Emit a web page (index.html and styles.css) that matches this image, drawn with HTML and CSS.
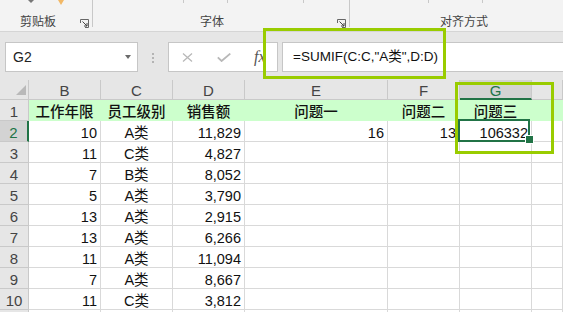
FILE: index.html
```html
<!DOCTYPE html>
<html lang="zh-CN">
<head>
    <meta charset="UTF-8">
    <title>SUMIF</title>
    <link rel="stylesheet" href="styles.css">
</head>
<body>
<div class="app">
    <!-- ribbon, only the group labels are visible -->
    <div class="ribbon">
        <div class="group group-clip">
            <div class="stubs">
                <span class="stub-caret"></span>
                <span class="stub-brush"></span>
            </div>
            <div class="group-foot">
                <span class="group-label">剪贴板</span>
                <svg class="launcher" viewBox="0 0 9 9"><path d="M0.5 4V0.5H8.5V8.5H5" fill="none" stroke="#666"/><path d="M2.5 2.5L7 7M7 4V7H4" fill="none" stroke="#444"/></svg>
            </div>
        </div>
        <div class="sep"></div>
        <div class="group group-font">
            <div class="stubs">
                <span class="stub-line" style="margin-left: 90px"></span>
                <span class="stub-line" style="margin-left: 43px"></span>
                <span class="stub-line" style="margin-left: 75px"></span>
            </div>
            <div class="group-foot">
                <span class="group-label">字体</span>
                <svg class="launcher" viewBox="0 0 9 9"><path d="M0.5 4V0.5H8.5V8.5H5" fill="none" stroke="#666"/><path d="M2.5 2.5L7 7M7 4V7H4" fill="none" stroke="#444"/></svg>
            </div>
        </div>
        <div class="sep"></div>
        <div class="group group-align">
            <div class="stubs">
                <span class="stub-line" style="margin-left: 78px"></span>
                <span class="stub-line" style="margin-left: 53px"></span>
            </div>
            <div class="group-foot">
                <span class="group-label">对齐方式</span>
            </div>
        </div>
    </div>

    <!-- name box + formula bar -->
    <div class="formula-bar">
        <div class="name-box">
            <span>G2</span>
            <span class="caret"></span>
        </div>
        <div class="grip"></div>
        <div class="fx-buttons">
            <svg class="btn-cancel" width="11" height="9" viewBox="0 0 11 9"><path d="M1 0.5L10 8.5M10 0.5L1 8.5" stroke="#b8b8b8" stroke-width="1.3"/></svg>
            <svg class="btn-enter" width="14" height="9" viewBox="0 0 14 9"><path d="M0.8 4.3L4.6 8L13.3 0.6" fill="none" stroke="#b8b8b8" stroke-width="1.8"/></svg>
            <span class="btn-fx">fx</span>
        </div>
        <div class="formula-input">=SUMIF(C:C,"A类",D:D)</div>
    </div>

    <!-- worksheet -->
    <div class="sheet">
        <div class="hd corner"><span class="tri"></span></div>
        <div class="hd">B</div>
        <div class="hd">C</div>
        <div class="hd">D</div>
        <div class="hd">E</div>
        <div class="hd">F</div>
        <div class="hd sel">G</div>
        <div class="hd"></div>

        <div class="rh">1</div>
        <div class="cell title">工作年限</div>
        <div class="cell title">员工级别</div>
        <div class="cell title">销售额</div>
        <div class="cell title">问题一</div>
        <div class="cell title">问题二</div>
        <div class="cell title">问题三</div>
        <div class="cell title"></div>

        <div class="rh sel">2</div>
        <div class="cell num">10</div>
        <div class="cell ctr">A类</div>
        <div class="cell num">11,829</div>
        <div class="cell num">16</div>
        <div class="cell num">13</div>
        <div class="cell num active">106332</div>
        <div class="cell"></div>

        <div class="rh">3</div>
        <div class="cell num">11</div>
        <div class="cell ctr">C类</div>
        <div class="cell num">4,827</div>
        <div class="cell"></div><div class="cell"></div><div class="cell"></div><div class="cell"></div>

        <div class="rh">4</div>
        <div class="cell num">7</div>
        <div class="cell ctr">B类</div>
        <div class="cell num">8,052</div>
        <div class="cell"></div><div class="cell"></div><div class="cell"></div><div class="cell"></div>

        <div class="rh">5</div>
        <div class="cell num">5</div>
        <div class="cell ctr">A类</div>
        <div class="cell num">3,790</div>
        <div class="cell"></div><div class="cell"></div><div class="cell"></div><div class="cell"></div>

        <div class="rh">6</div>
        <div class="cell num">13</div>
        <div class="cell ctr">A类</div>
        <div class="cell num">2,915</div>
        <div class="cell"></div><div class="cell"></div><div class="cell"></div><div class="cell"></div>

        <div class="rh">7</div>
        <div class="cell num">13</div>
        <div class="cell ctr">A类</div>
        <div class="cell num">6,266</div>
        <div class="cell"></div><div class="cell"></div><div class="cell"></div><div class="cell"></div>

        <div class="rh">8</div>
        <div class="cell num">11</div>
        <div class="cell ctr">A类</div>
        <div class="cell num">11,094</div>
        <div class="cell"></div><div class="cell"></div><div class="cell"></div><div class="cell"></div>

        <div class="rh">9</div>
        <div class="cell num">7</div>
        <div class="cell ctr">A类</div>
        <div class="cell num">8,667</div>
        <div class="cell"></div><div class="cell"></div><div class="cell"></div><div class="cell"></div>

        <div class="rh">10</div>
        <div class="cell num">11</div>
        <div class="cell ctr">C类</div>
        <div class="cell num">3,812</div>
        <div class="cell"></div><div class="cell"></div><div class="cell"></div><div class="cell"></div>

        <!-- row 11, only its top edge shows -->
        <div class="rh"></div>
        <div class="cell"></div><div class="cell"></div><div class="cell"></div><div class="cell"></div>
        <div class="cell"></div><div class="cell"></div><div class="cell"></div>
    </div>

    <!-- green callout frames drawn over the screenshot -->
    <div class="mark mark-formula"></div>
    <div class="mark mark-result"></div>
</div>
</body>
</html>
```

FILE: styles.css
```css
* {
    box-sizing: border-box;
}

body {
    margin: 0;
    width: 563px;
    height: 312px;
    overflow: hidden;
    background: #fff;
    font-family: "Liberation Sans", "Noto Sans CJK SC", sans-serif;
}

.app {
    position: relative;
}

/* Ribbon */
.ribbon {
    display: flex;
    height: 32px;
    background: #f3f3f3;
    border-bottom: 1px solid #d5d5d5;
}

.group {
    display: flex;
    flex-direction: column;
}

.group-clip {
    width: 92px;
}

.group-font {
    width: 256px;
}

.group-align {
    flex: 1;
}

.sep {
    width: 1px;
    height: 27px;
    background: #c8c8c8;
}

.stubs {
    display: flex;
    align-items: flex-start;
    height: 5px;
}

.stub-caret {
    margin-left: 28px;
    border-top: 3px solid #777;
    border-left: 3px solid transparent;
    border-right: 3px solid transparent;
}

.stub-brush {
    margin-left: 24px;
    border-top: 5px solid #f2b866;
    border-left: 3px solid transparent;
    border-right: 3px solid transparent;
}

.stub-line {
    width: 1px;
    height: 3px;
    background: #c8c8c8;
}

.group-foot {
    display: flex;
    align-items: flex-end;
    margin-top: auto;
    padding-bottom: 2px;
}

.group-label {
    font-family: "Noto Sans CJK SC", sans-serif;
    font-size: 12px;
    line-height: 16px;
    color: #444;
}

.group-clip .group-label {
    margin-left: 20px;
}

.group-font .group-label {
    margin-left: 107px;
}

.group-align .group-label {
    margin-left: 90px;
}

.launcher {
    width: 9px;
    height: 9px;
    margin-left: auto;
    margin-right: 3px;
    margin-bottom: 1px;
}

/* Formula bar */
.formula-bar {
    display: flex;
    align-items: flex-start;
    height: 48px;
    padding: 10px 0 0 5px;
    background: #e6e6e6;
}

.name-box {
    display: flex;
    align-items: center;
    width: 133px;
    height: 30px;
    padding: 0 6px 0 7px;
    background: #fff;
    border: 1px solid #c6c6c6;
    font-size: 14px;
    color: #222;
}

.caret {
    margin-left: auto;
    border-top: 4px solid #6a6a6a;
    border-left: 3px solid transparent;
    border-right: 3px solid transparent;
}

.grip {
    width: 2px;
    height: 2px;
    margin: 11px 14px 0 14px;
    background: #b4b4b4;
    box-shadow: 0 4px 0 #b4b4b4, 0 8px 0 #b4b4b4;
}

.fx-buttons {
    display: flex;
    align-items: center;
    width: 110px;
    height: 30px;
    padding-left: 13px;
    background: #fff;
    border: 1px solid #c6c6c6;
}

.btn-enter {
    margin-left: 24px;
}

.btn-fx {
    margin-left: 23px;
    font-family: "Liberation Serif", serif;
    font-style: italic;
    font-size: 16px;
    color: #555;
}

.formula-input {
    flex: 1;
    height: 30px;
    margin-left: 4px;
    padding-left: 10px;
    background: #fff;
    border: 1px solid #c6c6c6;
    border-right: none;
    font-size: 13.5px;
    line-height: 28px;
    color: #111;
}

/* Worksheet grid */
.sheet {
    display: grid;
    grid-template-columns: 29px 72px 72px 72px 143px 72px 72px 1fr;
    grid-template-rows: 20px;
    grid-auto-rows: 21px;
    height: 232px;
    overflow: hidden;
    background: #fff;
}

.hd, .rh {
    background: #e6e6e6;
    border-right: 1px solid #c9c9c9;
    border-bottom: 1px solid #c9c9c9;
    color: #444;
    font-size: 15px;
    text-align: center;
    padding-top: 3px;
    line-height: 16px;
}

.rh {
    padding-top: 4px;
}

.hd.sel {
    background: #d3d3d3;
    color: #217346;
    border-bottom: 2px solid #217346;
}

.rh.sel {
    background: #d3d3d3;
    color: #217346;
    border-right: 2px solid #217346;
}

.corner {
    display: flex;
    justify-content: flex-end;
    align-items: flex-end;
    padding: 0 2px 4px 0;
}

.tri {
    border-left: 10px solid transparent;
    border-bottom: 10px solid #b9b9b9;
}

.cell {
    border-right: 1px solid #d9d9d9;
    border-bottom: 1px solid #d9d9d9;
    padding: 4px 3px 0;
    font-size: 14.5px;
    line-height: 16px;
    color: #111;
    white-space: nowrap;
    overflow: hidden;
}

.num {
    text-align: right;
}

.ctr {
    text-align: center;
}

.title {
    background: #ccffcc;
    border-color: #ccffcc;
    text-align: center;
    font-weight: 500;
}

/* selected cell G2 */
.cell.active {
    position: relative;
    overflow: visible;
    z-index: 1;
}

.cell.active::after {
    content: "";
    position: absolute;
    left: -2px;
    top: -2px;
    right: 1px;
    bottom: -1px;
    border: 2px solid #217346;
}

.cell.active::before {
    content: "";
    position: absolute;
    right: -3px;
    bottom: -3px;
    width: 7px;
    height: 7px;
    background: #217346;
    border: 1px solid #fff;
    z-index: 1;
}

/* callout frames */
.mark {
    position: absolute;
    border: 3px solid #99cc00;
}

.mark-formula {
    left: 263px;
    top: 28px;
    width: 183px;
    height: 51px;
}

.mark-result {
    left: 455px;
    top: 82px;
    width: 99px;
    height: 72px;
}
```
